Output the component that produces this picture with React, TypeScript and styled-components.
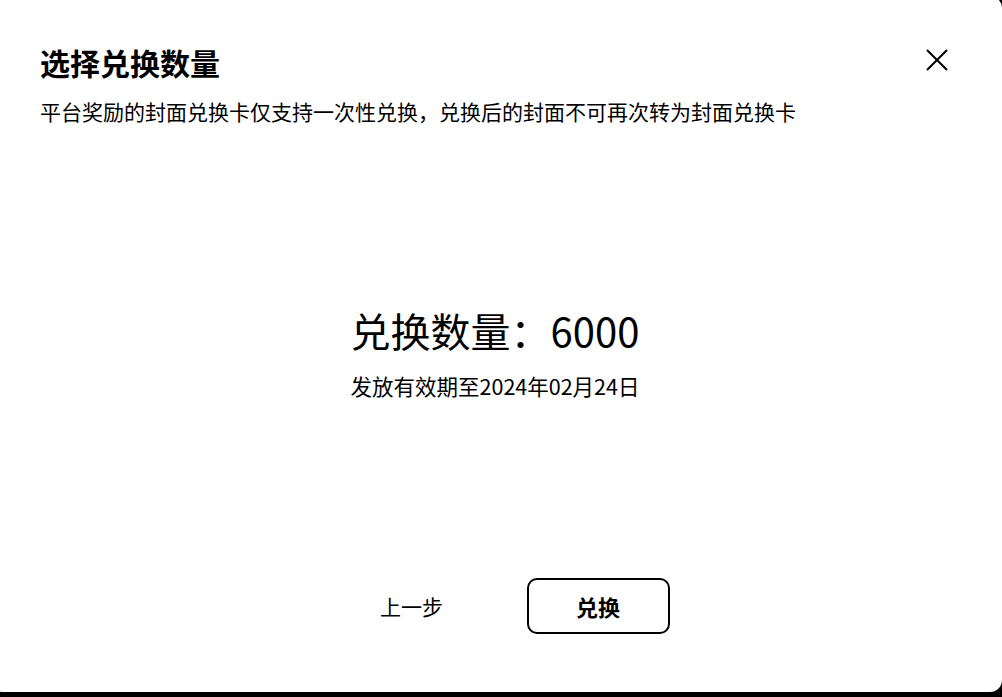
import React from "react";
import styled, { createGlobalStyle } from "styled-components";

const Global = createGlobalStyle`
  html, body { margin: 0; padding: 0; background: #000; overflow: hidden; }
  body { font-family: "Noto Sans CJK SC", "Noto Sans", sans-serif; color: #000; }
  * { box-sizing: border-box; }
`;

const Modal = styled.div`
  margin: -4px 0 0 -10px;
  width: 1012px;
  height: 696px;
  background: #fff;
  border-radius: 12px;
  display: flex;
  flex-direction: column;
  padding: 48px 52px 58px 50px;
`;

const Header = styled.div`
  display: flex;
  align-items: center;
  justify-content: space-between;
`;

const Title = styled.h1`
  margin: 0;
  font-size: 30px;
  line-height: 1.2;
  font-weight: 700;
`;

const CloseButton = styled.button`
  border: none;
  background: none;
  padding: 0;
  width: 22px;
  height: 22px;
  margin-top: -5px;
  margin-right: 2px;
  display: flex;
  cursor: pointer;
`;

const Subtitle = styled.p`
  margin: 19px 0 0;
  font-size: 21px;
  line-height: 1.2;
`;

const Body = styled.div`
  display: flex;
  flex-direction: column;
  align-items: center;
  margin-top: 182px;
`;

const Amount = styled.div`
  font-size: 40px;
  line-height: 1.2;
`;

const Expire = styled.div`
  margin-top: 19px;
  font-size: 21.5px;
  line-height: 1.2;
`;

const Footer = styled.div`
  margin-top: auto;
  display: flex;
  justify-content: center;
  align-items: center;
  gap: 44px;
  padding-left: 20px;
`;

const BackButton = styled.button`
  width: 142px;
  height: 56px;
  border: none;
  background: none;
  font-family: inherit;
  font-size: 21px;
  color: #000;
  cursor: pointer;
`;

const ConfirmButton = styled.button`
  width: 143px;
  height: 56px;
  border: 2px solid #000;
  border-radius: 10px;
  background: #fff;
  font-family: inherit;
  font-size: 22px;
  font-weight: 700;
  color: #000;
  cursor: pointer;
`;

export default function App() {
  return (
    <>
      <Global />
      <Modal>
        <Header>
          <Title>选择兑换数量</Title>
          <CloseButton aria-label="关闭">
            <svg width="22" height="22" viewBox="0 0 22 22">
              <path d="M1 1L21 21M21 1L1 21" stroke="#000" strokeWidth="2" />
            </svg>
          </CloseButton>
        </Header>
        <Subtitle>平台奖励的封面兑换卡仅支持一次性兑换，兑换后的封面不可再次转为封面兑换卡</Subtitle>
        <Body>
          <Amount>兑换数量：6000</Amount>
          <Expire>发放有效期至2024年02月24日</Expire>
        </Body>
        <Footer>
          <BackButton>上一步</BackButton>
          <ConfirmButton>兑换</ConfirmButton>
        </Footer>
      </Modal>
    </>
  );
}
